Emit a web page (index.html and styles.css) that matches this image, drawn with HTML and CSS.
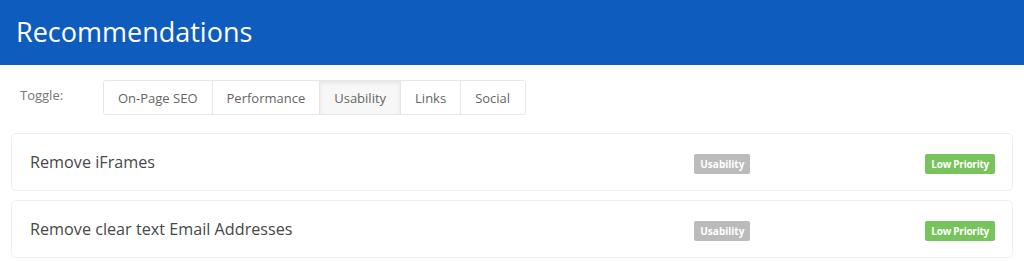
FILE: index.html
```html
<!DOCTYPE html>
<html lang="en">
<head>
  <meta charset="UTF-8" />
  <title>Recommendations</title>
  <link rel="stylesheet" href="styles.css">
</head>
<body>
  <div class="page-header">
    <h1>Recommendations</h1>
  </div>

  <div class="content">
    <div class="toggle-row">
      <span class="toggle-label">Toggle:</span>
      <div class="btn-group">
        <button class="btn">On-Page SEO</button>
        <button class="btn">Performance</button>
        <button class="btn active">Usability</button>
        <button class="btn">Links</button>
        <button class="btn">Social</button>
      </div>
    </div>

    <div class="rec">
      <div class="rec-title">Remove iFrames</div>
      <div class="rec-cat"><span class="badge badge-grey">Usability</span></div>
      <div class="rec-prio"><span class="badge badge-green">Low Priority</span></div>
    </div>

    <div class="rec">
      <div class="rec-title">Remove clear text Email Addresses</div>
      <div class="rec-cat"><span class="badge badge-grey">Usability</span></div>
      <div class="rec-prio"><span class="badge badge-green">Low Priority</span></div>
    </div>
  </div>
</body>
</html>
```

FILE: styles.css
```css
*, *::before, *::after {
  box-sizing: border-box;
}

body {
  margin: 0;
  font-family: "Open Sans", "Noto Sans", sans-serif;
  background: #fff;
  color: #555;
}

.page-header {
  background-color: #0f5cbf;
  height: 65px;
  padding: 0 16px;
  display: flex;
  align-items: center;
}

.page-header h1 {
  margin: 0;
  color: #fff;
  font-size: 27px;
  font-weight: 400;
  line-height: 1;
  padding-bottom: 2px;
}

.content {
  padding: 15px 11px 0;
}

.toggle-row {
  display: flex;
  align-items: flex-start;
  padding-left: 9px;
  margin-bottom: 18px;
}

.toggle-label {
  font-size: 13px;
  color: #777;
  width: 83px;
  line-height: 30px;
}

.btn-group {
  display: flex;
  border: 1px solid #e6e6e6;
  border-radius: 3px;
  overflow: hidden;
}

.btn {
  font-family: inherit;
  font-size: 13px;
  color: #666;
  background: #fff;
  border: 0;
  border-right: 1px solid #e6e6e6;
  height: 33px;
  padding: 0 14px;
  cursor: pointer;
}

.btn:last-child {
  border-right: 0;
  padding-right: 15px;
}

.btn.active {
  background: #f7f7f7;
  box-shadow: inset 0 2px 4px rgba(0, 0, 0, 0.08);
}

.rec {
  display: flex;
  align-items: center;
  height: 58px;
  border: 1px solid #efefef;
  border-radius: 5px;
  padding: 0 17px 0 18px;
  margin-bottom: 9px;
}

.rec-title {
  flex: 1;
  font-size: 16.2px;
  color: #484848;
  padding-bottom: 1px;
}

.rec-cat {
  width: 231px;
}

.badge {
  display: inline-block;
  color: #fff;
  font-size: 10px;
  font-weight: 700;
  line-height: 20px;
  height: 20px;
  padding: 0 6px;
  border-radius: 2px;
}

.badge-grey {
  background: #bbbbbb;
}

.badge-green {
  background: #77c35c;
  letter-spacing: -0.25px;
}
```
